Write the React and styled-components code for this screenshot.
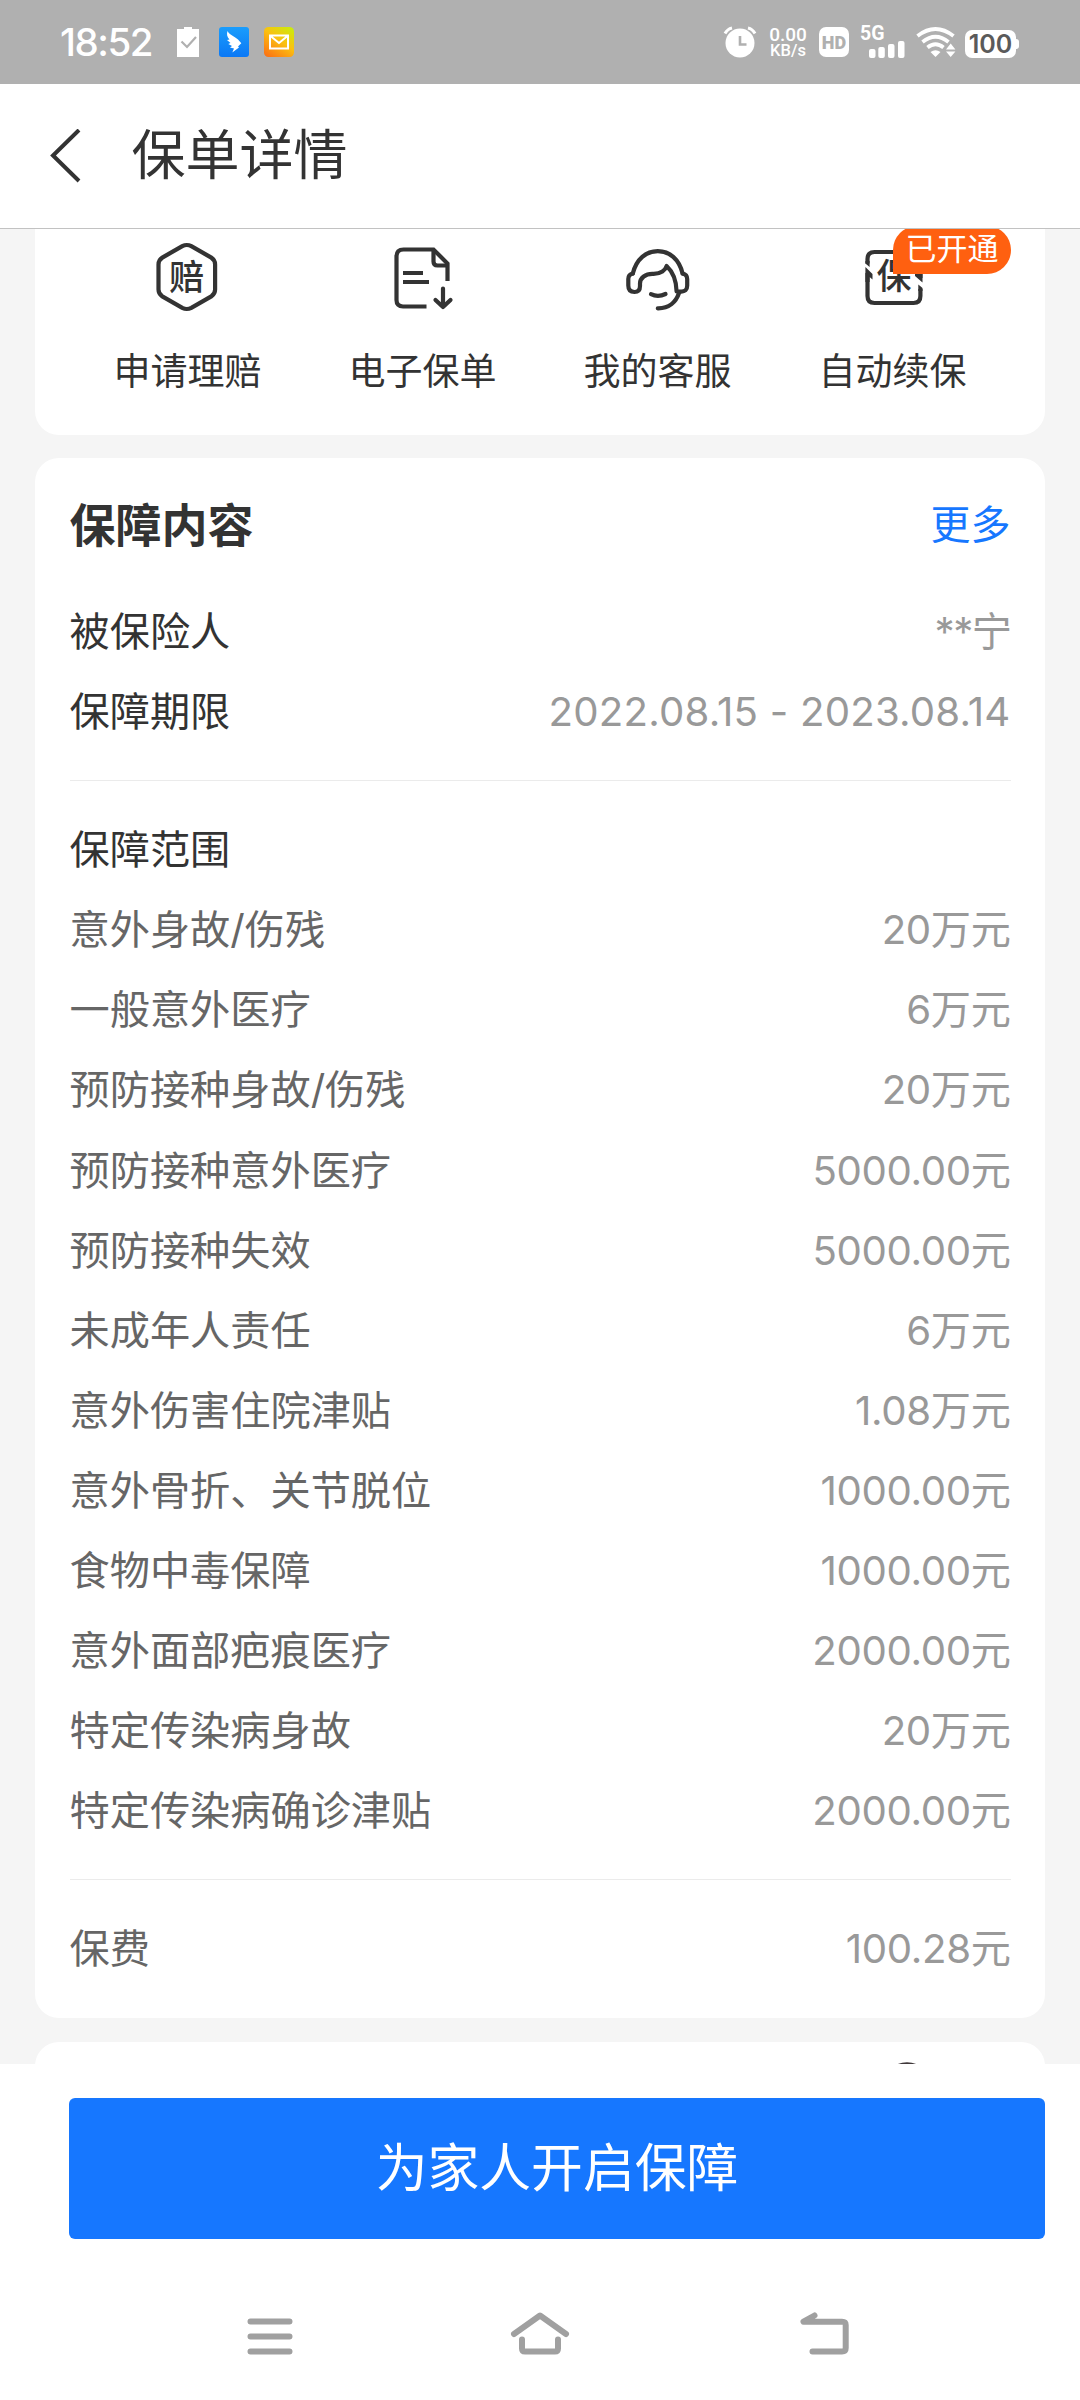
import React from "react";
import styled, { createGlobalStyle } from "styled-components";

const coverage = [
    { name: "意外身故/伤残", value: "20万元" },
    { name: "一般意外医疗", value: "6万元" },
    { name: "预防接种身故/伤残", value: "20万元" },
    { name: "预防接种意外医疗", value: "5000.00元" },
    { name: "预防接种失效", value: "5000.00元" },
    { name: "未成年人责任", value: "6万元" },
    { name: "意外伤害住院津贴", value: "1.08万元" },
    { name: "意外骨折、关节脱位", value: "1000.00元" },
    { name: "食物中毒保障", value: "1000.00元" },
    { name: "意外面部疤痕医疗", value: "2000.00元" },
    { name: "特定传染病身故", value: "20万元" },
    { name: "特定传染病确诊津贴", value: "2000.00元" },
];

const ClaimIcon = () => (
    <svg width="70" height="70" viewBox="1.2 0 70 70" fill="none">
        <path
            d="M30.5 4.2 Q35 1.8 39.5 4.2 L59.5 15.6 Q63.3 18 63.3 22.5 V47.5 Q63.3 52 59.5 54.4 L39.5 65.8 Q35 68.2 30.5 65.8 L10.5 54.4 Q6.7 52 6.7 47.5 V22.5 Q6.7 18 10.5 15.6 Z"
            stroke="#333"
            strokeWidth="4.2"
        />
        <IconText x="35" y="48" fontSize="35" textAnchor="middle">赔</IconText>
    </svg>
);

const PolicyIcon = () => (
    <svg width="70" height="70" viewBox="0 0 70 70" fill="none" stroke="#333" strokeWidth="4.2">
        <path d="M38.5 64.5 H15 Q8.5 64.5 8.5 58 V14.5 Q8.5 7.5 15.5 7.5 H45.5 L59.5 21.5 V39" />
        <path d="M45.5 7.5 V19.5 Q45.5 23.5 49.5 23.5 H59.5" />
        <path d="M15 31 H35 M15 40 H41" />
        <path d="M55 46.5 V65 M47.5 58 L55 65 L62.5 58" strokeLinecap="round" strokeLinejoin="round" />
    </svg>
);

const ServiceIcon = () => (
    <svg width="70" height="70" viewBox="0 0 70 70" fill="none" stroke="#333" strokeWidth="4.2" strokeLinecap="round" strokeLinejoin="round">
        <path d="M9.8 31.5 C13.5 17 23 9.2 34.8 9.2 C46.5 9.2 56 17 59.6 31.5" />
        <path d="M9.8 31.5 Q5.3 32.5 5.3 37 V43.5 Q5.3 50 11.5 50 Q17 50 17 44 V41.5 C17 36 22.5 31.5 30 31.8 C38 32 42.5 28 43.6 24 C49 29 53.3 38 53.6 49.5 H57.5 Q64.2 50 64.2 43.5 V37 Q64.2 32.5 59.6 31.5" />
        <path d="M28 52.2 Q35 55.6 42.5 52" />
        <path d="M56 51 C53 60 46 66.5 34.8 66.3" />
    </svg>
);

const RenewIcon = () => (
    <svg width="70" height="70" viewBox="0 0 70 70" fill="none" stroke="#333" strokeWidth="4.2">
        <path d="M9.5 21.5 V17 Q9.5 10 16.5 10 H55.5 Q62.4 10 62.4 17 V36" />
        <path d="M9.5 31 V54 Q9.5 61 16.5 61 H55.5 Q62.4 61 62.4 54 V47" />
        <path
            d="M7.4 19 H11.6 V25 L7.4 21.500 Z M7.4 25 L14.5 32 V37.500 L11.6 35 V40 H7.4 Z M64.500 40.500 L57 34 V29 L60.300 31 H64.500 Z M60.300 42.500 L64.500 46 V49 H60.300 Z"
            fill="#333"
            stroke="none"
        />
        <IconText x="36" y="47" fontSize="35" textAnchor="middle">保</IconText>
    </svg>
);

const actions = [
    { label: "申请理赔", icon: <ClaimIcon /> },
    { label: "电子保单", icon: <PolicyIcon /> },
    { label: "我的客服", icon: <ServiceIcon /> },
    { label: "自动续保", icon: <RenewIcon />, badge: "已开通" },
];

const StatusBar = () => (
    <StatusContainer>
        <Clock>18:52</Clock>
        <svg width="120" height="30" viewBox="0 0 120 30">
            <defs>
                <linearGradient id="bird" x1="0" y1="0" x2="0" y2="1">
                    <stop offset="0" stopColor="#1a9dfc" />
                    <stop offset="1" stopColor="#0b78f5" />
                </linearGradient>
                <linearGradient id="mail" x1="0.15" y1="1" x2="0.85" y2="0">
                    <stop offset="0" stopColor="#fb7414" />
                    <stop offset="0.55" stopColor="#fbc010" />
                    <stop offset="1" stopColor="#cdea0c" />
                </linearGradient>
            </defs>
            <path d="M2 2 H7 V0 H15 V2 H22 V30 H0 V2 Z" fill="#fff" />
            <path d="M4.5 14.5 L10 20 L19 10" fill="none" stroke="#b0b0b0" strokeWidth="2.2" />
            <rect x="42" width="30" height="30" rx="3" fill="url(#bird)" />
            <path
                d="M50.5 4 C52 7.5 58 9.500 61 12.500 L64.300 16.300 L61 19.500 L62 20.500 L55.300 25.500 L57 21.500 L53 20.500 L55 19 L51.300 17 L53.500 16 L50 13 L52.500 12.500 C50 10 49.500 7 50.500 4 Z"
                fill="#fff"
            />
            <rect x="87" width="30" height="30" rx="4.500" fill="url(#mail)" />
            <path d="M93 8.500 H111 V21.500 H93 Z M93.500 9 L102 16 L110.500 9" fill="none" stroke="#fff" strokeWidth="2" />
        </svg>
        <StatusRight>
            <svg width="34" height="32" viewBox="0 0 34 32">
                <circle cx="17" cy="17" r="14.500" fill="#fff" />
                <path d="M2 7.500 Q4.500 3 9 2 M32 7.500 Q29.500 3 25 2" stroke="#fff" strokeWidth="3" fill="none" />
                <path d="M17 10 V18.500 H23.500" stroke="#b0b0b0" strokeWidth="2.600" fill="none" />
            </svg>
            <NetSpeed>
                <SpeedValue>0.00</SpeedValue>
                <span>KB/s</span>
            </NetSpeed>
            <HdBadge>HD</HdBadge>
            <Signal>
                <span>5G</span>
                <svg width="36" height="17" viewBox="0 0 36 17" fill="#fff">
                    <rect x="0" y="8" width="6.500" height="9" rx="2" />
                    <rect x="9.300" y="6" width="6.500" height="11" rx="2" />
                    <rect x="19" y="3" width="6.500" height="14" rx="2" />
                    <rect x="29" y="0" width="6.500" height="17" rx="2" />
                </svg>
            </Signal>
            <svg width="40" height="32" viewBox="0 0 40 32" fill="none" stroke="#fff" strokeWidth="3.800">
                <path d="M1.500 10 Q19.500 -4 37.500 10" />
                <path d="M6.500 16 Q19.500 5.500 32.500 16" />
                <path d="M11.500 21.500 Q19.500 15 27.500 21.500" />
                <path d="M14.500 26 Q19.500 22.500 24.500 26 L19.500 31 Z" fill="#fff" stroke="none" />
                <path d="M30 23.500 L34.700 17.500 L39.400 23.500 Z M30 25.500 H39.400 L34.700 31 Z" fill="#fff" stroke="none" />
            </svg>
            <Battery>100</Battery>
        </StatusRight>
    </StatusContainer>
);

const App = () => {
    return (
        <Screen>
            <GlobalStyle />
            <StatusBar />
            <Header>
                <svg width="32" height="54" viewBox="0.5 0.5 32 54" fill="none" stroke="#333" strokeWidth="4">
                    <path d="M29.500 1.500 L3.500 27 L29.500 52.500" />
                </svg>
                <Title>保单详情</Title>
            </Header>
            <Content>
                <ActionCard>
                    {actions.map((item) => (
                        <Action key={item.label}>
                            {item.icon}
                            <ActionLabel>{item.label}</ActionLabel>
                            {item.badge && <Badge>{item.badge}</Badge>}
                        </Action>
                    ))}
                </ActionCard>
                <Card>
                    <CardHeader>
                        <CardTitle>保障内容</CardTitle>
                        <More href="#more">更多</More>
                    </CardHeader>
                    <Row>
                        <Name $dark>被保险人</Name>
                        <Value $spacing="-1.5px">**宁</Value>
                    </Row>
                    <Row>
                        <Name $dark>保障期限</Name>
                        <Value $spacing="0.2px">2022.08.15 - 2023.08.14</Value>
                    </Row>
                    <Divider />
                    <Row>
                        <Name $dark>保障范围</Name>
                    </Row>
                    {coverage.map((item) => (
                        <Row key={item.name}>
                            <Name>{item.name}</Name>
                            <Value>{item.value}</Value>
                        </Row>
                    ))}
                    <Divider />
                    <Row>
                        <Name>保费</Name>
                        <Value>100.28元</Value>
                    </Row>
                </Card>
                <NextCard>
                    <svg width="48" height="48" viewBox="0 0 48 48">
                        <circle cx="24" cy="24" r="22.5" fill="none" stroke="#40383a" strokeWidth="2.500" />
                    </svg>
                </NextCard>
            </Content>
            <Footer>
                <SubmitButton>为家人开启保障</SubmitButton>
            </Footer>
            <NavBar>
                <svg width="60" height="50" viewBox="0 0 60 50">
                    <path d="M10.500 9.500 H49.500 M10.500 24.500 H49.500 M10.500 39.500 H49.500" />
                </svg>
                <svg width="60" height="50" viewBox="0 0 60 50">
                    <path d="M4 22 L30 3.500 L56 22 M12 27.500 V36.500 Q12 39.500 15 39.500 H45 Q48 39.500 48 36.500 V27.500" />
                </svg>
                <svg width="60" height="50" viewBox="0 0 60 50">
                    <path d="M19.500 3.500 L8.500 9.700 H47 Q50.700 9.700 50.700 13 V36 Q50.700 39.500 47 39.500 H17.500" />
                </svg>
            </NavBar>
        </Screen>
    );
};

const GlobalStyle = createGlobalStyle`
    * {
        box-sizing: border-box;
    }
    body {
        margin: 0;
        background: #fff;
        font-family: Inter, "Noto Sans CJK SC", sans-serif;
        color: #333;
    }
    svg {
        display: block;
        flex-shrink: 0;
    }
`;

const IconText = styled.text`
    font-family: "Noto Sans CJK SC", sans-serif;
    font-weight: 500;
    fill: #333;
    stroke: none;
`;

const Screen = styled.div`
    display: flex;
    flex-direction: column;
    width: 1080px;
    height: 2400px;
    overflow: hidden;
`;

const StatusContainer = styled.div`
    display: flex;
    align-items: center;
    height: 84px;
    padding: 0 60px;
    background: #b0b0b0;
    color: #fff;
`;

const Clock = styled.span`
    width: 117px;
    font-family: Inter, sans-serif;
    font-size: 38.5px;
    font-weight: 500;
    letter-spacing: -1.5px;
    white-space: nowrap;
`;

const StatusRight = styled.div`
    display: flex;
    align-items: center;
    margin-left: auto;
`;

const NetSpeed = styled.div`
    display: flex;
    flex-direction: column;
    align-items: center;
    width: 40px;
    margin-left: 11px;
    font-family: Roboto, sans-serif;
    font-size: 16.5px;
    font-weight: 500;
    line-height: 15px;
`;

const SpeedValue = styled.span`
    margin-bottom: 1px;
    font-size: 19px;
`;

const HdBadge = styled.div`
    width: 30px;
    height: 30px;
    margin-left: 11px;
    border-radius: 7px;
    background: #fff;
    color: #b0b0b0;
    font-family: Roboto, sans-serif;
    font-size: 18px;
    font-weight: 900;
    line-height: 31px;
    text-align: center;
`;

const Signal = styled.div`
    display: flex;
    flex-direction: column;
    width: 45px;
    height: 30px;
    margin: 0 11px;
    font-family: Roboto, sans-serif;
    font-size: 19.5px;
    font-weight: 700;
    line-height: 14px;
    svg {
        margin: 0 0 0 9px;
    }
`;

const Battery = styled.div`
    position: relative;
    width: 51px;
    height: 28px;
    margin: 3px 4px 0 9px;
    border-radius: 7px;
    background: #fff;
    color: #5a5a5a;
    font-family: Inter, sans-serif;
    font-size: 25px;
    font-weight: 600;
    line-height: 28px;
    text-align: center;
    &:after {
        content: "";
        position: absolute;
        top: 9px;
        right: -3px;
        width: 4px;
        height: 10px;
        border-radius: 0 3px 3px 0;
        background: #fff;
    }
`;

const Header = styled.header`
    display: flex;
    align-items: center;
    height: 145px;
    padding: 0 50px;
    border-bottom: 1px solid #c2c2c2;
    background: #fff;
`;

const Title = styled.h1`
    margin: 0 0 0 49.5px;
    font-size: 54px;
    font-weight: 400;
    line-height: 72px;
`;

const Content = styled.main`
    display: flex;
    flex-direction: column;
    height: 1835px;
    padding: 0 35px;
    overflow: hidden;
    background: #f5f5f5;
`;

const ActionCard = styled.section`
    display: flex;
    flex-shrink: 0;
    height: 206px;
    padding: 13px 35px 0;
    border-radius: 0 0 24px 24px;
    background: #fff;
`;

const Action = styled.div`
    position: relative;
    display: flex;
    flex-direction: column;
    align-items: center;
    width: 235px;
`;

const ActionLabel = styled.span`
    margin-top: 36px;
    font-size: 37px;
    line-height: 48px;
`;

const Badge = styled.span`
    position: absolute;
    top: -16px;
    left: 118px;
    width: 118px;
    height: 48px;
    border-radius: 24px 24px 24px 0;
    background: #ff6010;
    color: #fff;
    font-size: 31px;
    line-height: 46px;
    text-align: center;
`;

const Card = styled.section`
    flex-shrink: 0;
    height: 1560px;
    margin-top: 23px;
    padding: 28px 34.5px 0;
    border-radius: 24px;
    background: #fff;
`;

const CardHeader = styled.div`
    display: flex;
    align-items: center;
    justify-content: space-between;
    height: 72px;
    margin-bottom: 34px;
`;

const CardTitle = styled.h2`
    margin: 0;
    font-size: 46px;
    font-weight: 700;
`;

const More = styled.a`
    color: #1677ff;
    font-size: 40px;
    text-decoration: none;
`;

const Row = styled.div`
    display: flex;
    justify-content: space-between;
    height: 80.1px;
    font-size: 40.2px;
    line-height: 80px;
    white-space: nowrap;
`;

const Name = styled.span`
    color: ${(props) => (props.$dark ? "#333" : "#666")};
`;

const Value = styled.span`
    color: #999;
    letter-spacing: ${(props) => props.$spacing || "-0.35px"};
`;

const Divider = styled.div`
    height: 1px;
    margin: 28px 0 29px;
    background: #ebebeb;
`;

const NextCard = styled.section`
    flex-shrink: 0;
    height: 200px;
    margin-top: 24px;
    padding: 19.5px 0 0 848px;
    border-radius: 24px 24px 0 0;
    background: #fff;
`;

const Footer = styled.footer`
    height: 175px;
    padding: 34px 35px 0 69px;
    background: #fff;
`;

const SubmitButton = styled.button`
    display: block;
    width: 976px;
    height: 141px;
    padding: 0;
    border: none;
    border-radius: 6px;
    background: #1677ff;
    color: #fff;
    font-family: inherit;
    font-size: 51.8px;
    line-height: 141px;
`;

const NavBar = styled.nav`
    display: flex;
    gap: 210px;
    height: 161px;
    padding: 73px 0 0 240px;
    background: #fff;
    svg + svg + svg {
        margin-left: 15px;
    }
    path {
        fill: none;
        stroke: #a0a0a0;
        stroke-width: 6;
        stroke-linecap: round;
        stroke-linejoin: round;
    }
`;

export default App;
